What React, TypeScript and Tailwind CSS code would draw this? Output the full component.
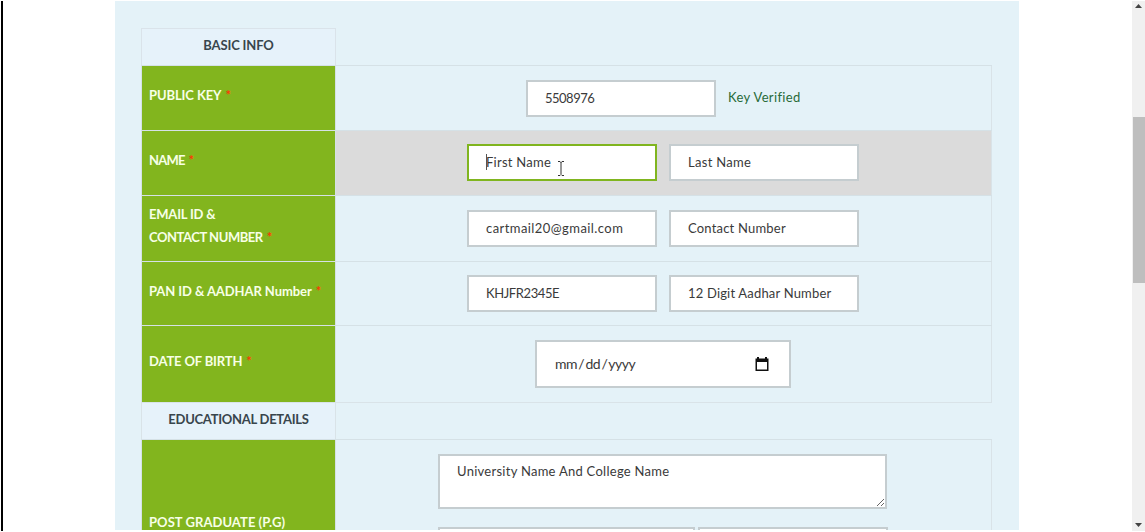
import type { ReactNode } from "react";

const box =
  "block rounded-none border-2 border-[#c5cdd0] bg-white text-[13px] leading-[18px] text-[#3a3a3a] placeholder:text-[#3a3a3a] placeholder:opacity-100 outline-none";

function Field({ value, hint, tracking = "", focused = false }: { value?: string; hint?: string; tracking?: string; focused?: boolean }) {
  return (
    <input
      className={`${box} h-[37px] w-[190px] px-[17px] pb-px ${tracking} ${focused ? "border-[#80b51f]!" : ""}`}
      defaultValue={value}
      placeholder={hint}
    />
  );
}

function Row({ label, height, children, active = false, pad = "pb-1.5" }: { label: ReactNode; height: string; children: ReactNode; active?: boolean; pad?: string }) {
  return (
    <div className={`flex shrink-0 border-t border-[#d5e1e6] ${height}`}>
      <div className={`flex w-[195px] shrink-0 flex-col justify-center border-x border-[#d5e1e6] bg-[#82b51e] bg-clip-padding pl-[7px] text-[13px] leading-[23px] font-bold text-[#f7ffe7] ${pad}`}>
        {label}
      </div>
      <div className={`flex grow items-center border-r border-[#d9e3e8] ${active ? "bg-[#dbdbdb]" : "bg-[#e4f2f8]"}`}>{children}</div>
    </div>
  );
}

function Heading({ children, tracking }: { children: ReactNode; tracking: string }) {
  return (
    <div className="flex h-[37px] shrink-0 border-t border-[#d9e3e8]">
      <div className={`flex w-[195px] items-center justify-center border-x border-[#d9e3e8] bg-[#e6f2fa] pb-[3px] text-[13px] font-bold text-[#38454c] ${tracking}`}>
        {children}
      </div>
    </div>
  );
}

const Star = () => <span className="ml-1 text-[13px] tracking-normal text-[#fb3b05]">*</span>;

export default function App() {
  return (
    <div className="flex h-[532px] w-[1145px] overflow-hidden bg-white pb-px font-['Lato','Open_Sans',sans-serif]">
      <div className="mt-px ml-px h-[530px] w-[2px] shrink-0 bg-black" />
      <main className="mt-px ml-[112px] flex h-[529px] w-[904px] shrink-0 flex-col overflow-hidden bg-[#e4f2f8] pt-[27px] pr-[27px] pl-[26px]">
        <div className="flex h-[37px] w-[195px] shrink-0 items-center justify-center border border-b-0 border-[#dae3ea] bg-[#e6f2fa] pb-[3px] text-[13px] font-bold tracking-[-0.15px] text-[#38454c]">
          BASIC INFO
        </div>
        <Row height="h-[65px]" label={<div className="tracking-[-0.1px]">PUBLIC KEY<Star /></div>}>
          <div className="ml-[190px] flex items-center gap-3">
            <Field value="5508976" tracking="tracking-[-0.5px]" />
            <span className="text-[13px] tracking-[0.35px] text-[#286b38]">Key Verified</span>
          </div>
        </Row>
        <Row height="h-[65px]" active label={<div className="tracking-[-0.8px]">NAME<Star /></div>}>
          <div className="relative mb-0.5 ml-[131px] flex gap-3">
            <Field hint="First Name" tracking="tracking-[0.25px]" focused />
            <Field hint="Last Name" tracking="tracking-[0.3px]" />
            <span className="absolute top-[10px] left-[19px] h-4 w-px bg-[#555]" />
            <svg className="absolute top-[17px] left-[90px]" width="8" height="15" viewBox="0 0 8 15" fill="none" stroke="#333">
              <path d="M1 .5h2l1 1 1-1h2M4 1v12M1 14.5h2l1-1 1 1h2" />
            </svg>
          </div>
        </Row>
        <Row height="h-[66px]" label={<><div className="tracking-[-0.2px]">EMAIL ID &amp;</div><div className="tracking-[-0.45px]">CONTACT NUMBER<Star /></div></>}>
          <div className="ml-[131px] flex gap-3">
            <Field value="cartmail20@gmail.com" tracking="tracking-[0.43px]" />
            <Field hint="Contact Number" tracking="tracking-[0.2px]" />
          </div>
        </Row>
        <Row height="h-[64px]" pad="pb-1" label={<div className="tracking-[-0.08px]">PAN ID &amp; AADHAR Number<Star /></div>}>
          <div className="ml-[131px] flex gap-3">
            <Field value="KHJFR2345E" tracking="tracking-[-0.4px]" />
            <Field hint="12 Digit Aadhar Number" tracking="tracking-[0.18px]" />
          </div>
        </Row>
        <Row height="h-[77px]" label={<div className="tracking-[-0.15px]">DATE OF BIRTH<Star /></div>}>
          <div className={`${box} ml-[199px] flex! h-[48px] w-[256px] items-center justify-between pr-5 pl-[18px]`}>
            <span className="text-[14px] tracking-[-0.45px] [word-spacing:-1.9px]">mm / dd / yyyy</span>
            <svg width="14" height="15" viewBox="0 0 14 15">
              <path fill="#111" fillRule="evenodd" d="M2 0h2v1.5h6V0h2v1.5h1.5V14H.5V1.5H2zM2 5v7.5h10V5z" />
            </svg>
          </div>
        </Row>
        <Heading tracking="tracking-[-0.27px]">EDUCATIONAL DETAILS</Heading>
        <Row height="h-[171px]" pad="pb-1.5" label={<div className="tracking-[0.05px]">POST GRADUATE (P.G)</div>}>
          <div className="ml-[102px] flex h-full flex-col pt-[14px]">
            <textarea className={`${box} h-[55px] w-[449px] resize px-[17px] pt-1.5 tracking-[0.27px]`} placeholder="University Name And College Name" />
            <div className="mt-[18px] flex gap-[3px]">
              <div className={`${box} h-[37px] w-[257px]`} />
              <div className={`${box} h-[37px] w-[190px]`} />
            </div>
          </div>
        </Row>
      </main>
      <aside className="mt-px ml-auto flex h-[530px] w-[13px] shrink-0 flex-col items-center justify-between bg-[#f0f0f0]">
        <svg className="mt-[3px]" width="7" height="4" viewBox="0 0 7 4"><path d="M3.5 0L7 4H0z" fill="#444" /></svg>
        <div className="mt-[109px] mb-auto h-[166px] w-3 self-end bg-[#bebebe]" />
        <svg className="mb-[4px]" width="7" height="4" viewBox="0 0 7 4"><path d="M3.5 4L0 0h7z" fill="#444" /></svg>
      </aside>
    </div>
  );
}
